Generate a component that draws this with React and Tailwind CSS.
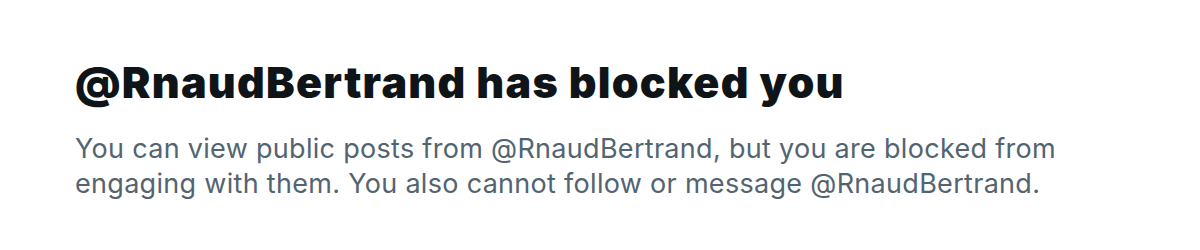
export default function App() {
  return (
    <div className="w-[1200px] h-[250px] bg-white pl-[75px] pt-[57px]" style={{ fontFamily: "Inter, 'Noto Sans', sans-serif" }}>
      <h1 className="text-[43px] leading-[50px] font-black text-[#0f1419] tracking-[1.25px]">
        @RnaudBertrand has blocked you
      </h1>
      <p className="mt-[24px] text-[27px] leading-[35px] text-[#536471] tracking-[0.3px] w-[1060px]">
        You can view public posts from @RnaudBertrand, but you are blocked from engaging with them. You also cannot follow or message @RnaudBertrand.
      </p>
    </div>
  );
}
